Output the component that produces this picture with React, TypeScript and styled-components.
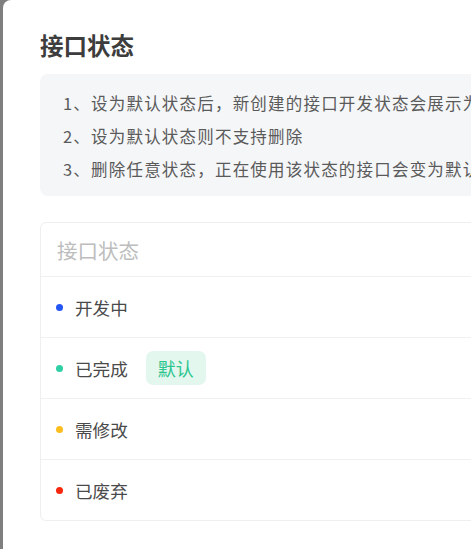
import React from "react";
import styled, { createGlobalStyle } from "styled-components";

const Global = createGlobalStyle`
  html, body {
    margin: 0;
    padding: 0;
    width: 471px;
    height: 549px;
    overflow: hidden;
    background: #7f7f7f;
  }
  * { box-sizing: border-box; }
`;

const Page = styled.div`
  display: flex;
  height: 549px;
  font-family: "Noto Sans CJK SC", "Noto Sans", sans-serif;
`;

const Backdrop = styled.div`
  width: 3px;
  flex: none;
  background: #7f7f7f;
`;

const Drawer = styled.div`
  flex: none;
  width: 760px;
  height: 549px;
  background: #ffffff;
  border-top-left-radius: 8px;
  padding: 29px 0 0 37px;
  display: flex;
  flex-direction: column;
`;

const Title = styled.h2`
  margin: 0;
  font-size: 23.5px;
  line-height: 33px;
  font-weight: 700;
  color: #3d3d3d;
`;

const Notice = styled.div`
  margin-top: 12px;
  background: #f5f6f8;
  border-radius: 8px;
  padding: 13px 0 10px 23px;
  display: flex;
  flex-direction: column;
`;

const NoticeLine = styled.div`
  font-size: 16.5px;
  letter-spacing: 1.2px;
  line-height: 33px;
  color: #5a5a5a;
  white-space: nowrap;
`;

const Card = styled.div`
  margin-top: 26px;
  border: 1px solid #efefef;
  border-radius: 6px;
  display: flex;
  flex-direction: column;
`;

const Header = styled.div`
  height: 54px;
  display: flex;
  align-items: center;
  padding-left: 16px;
  font-size: 20.5px;
  color: #bdbdbd;
  border-bottom: 1px solid #f0f0f0;
`;

const Row = styled.div<{ $last?: boolean }>`
  height: ${(p) => (p.$last ? 60 : 61)}px;
  display: flex;
  align-items: center;
  padding-left: 15px;
  border-bottom: ${(p) => (p.$last ? "none" : "1px solid #f0f0f0")};
`;

const Dot = styled.span<{ $color: string }>`
  width: 7px;
  height: 7px;
  border-radius: 50%;
  background: ${(p) => p.$color};
  flex: none;
`;

const Name = styled.span`
  margin-left: 12px;
  font-size: 17.6px;
  color: #4a4a4a;
`;

const Badge = styled.span`
  margin-left: 18px;
  height: 34px;
  padding: 0 12px;
  display: inline-flex;
  align-items: center;
  border-radius: 7px;
  background: #e4f7ee;
  color: #2cc58e;
  font-size: 18px;
`;

const notices = [
  "1、设为默认状态后，新创建的接口开发状态会展示为该状态",
  "2、设为默认状态则不支持删除",
  "3、删除任意状态，正在使用该状态的接口会变为默认状态",
];

const rows = [
  { name: "开发中", color: "#2456f6" },
  { name: "已完成", color: "#2ecfa2", def: true },
  { name: "需修改", color: "#fbbd1e" },
  { name: "已废弃", color: "#f5270c" },
];

export default function App() {
  return (
    <Page>
      <Global />
      <Backdrop />
      <Drawer>
        <Title>接口状态</Title>
        <Notice>
          {notices.map((n) => (
            <NoticeLine key={n}>{n}</NoticeLine>
          ))}
        </Notice>
        <Card>
          <Header>接口状态</Header>
          {rows.map((r, i) => (
            <Row key={r.name} $last={i === rows.length - 1}>
              <Dot $color={r.color} />
              <Name>{r.name}</Name>
              {r.def && <Badge>默认</Badge>}
            </Row>
          ))}
        </Card>
      </Drawer>
    </Page>
  );
}
